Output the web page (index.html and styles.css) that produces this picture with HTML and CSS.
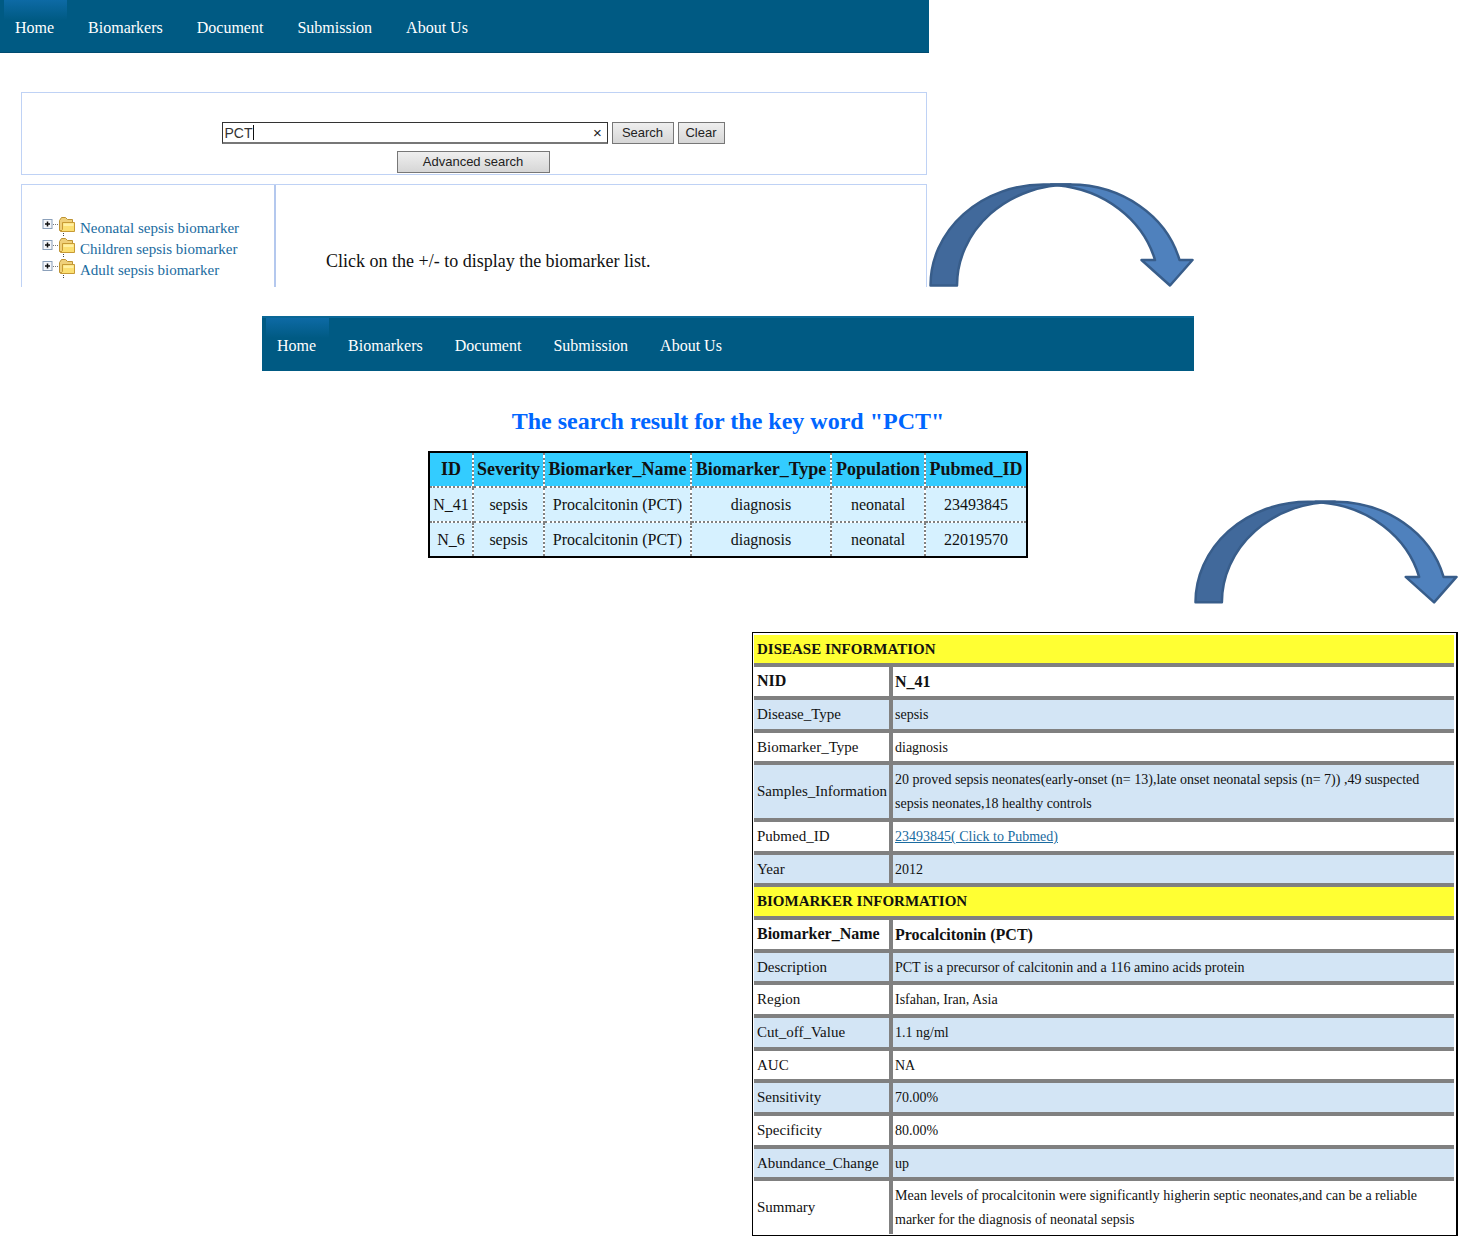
FILE: index.html
```html
<!DOCTYPE html>
<html lang="en">
<head>
<meta charset="utf-8">
<meta name="viewport" content="width=device-width, initial-scale=1">
<title>Sepsis biomarker search</title>
<link rel="stylesheet" href="styles.css">
</head>
<body>
<svg class="defs" aria-hidden="true">
  <symbol id="curved-arrow" viewBox="0 0 265 104">
    <path d="M1.5 102.5A113 101 0 0 1 114.500 1.500H141.500A113 101 0 0 0 28 102.500Z" fill="#41699b"/>
    <path d="M128 2.200A113 101 0 0 1 226 77H212.500L241 102.500L263.500 77H250.500A113 101 0 0 0 141.500 1.500H122Z" fill="#4f81bd"/>
  </symbol>
  <symbol id="plus-folder" viewBox="0 0 34 22">
    <rect x="1" y="3.500" width="9" height="9" fill="#f4f6fa" stroke="#8ba0ba"/>
    <path d="M3 8h5M5.500 5.500v5" stroke="#111" stroke-width="1.500"/>
    <path d="M11 8.500h6" stroke="#777" stroke-dasharray="1 1"/>
    <path d="M17.500 14.500V4.500L19.500 1.500H23.500L25.500 3.500H30.500V14.500Z" fill="#efd07a" stroke="#bd9333"/>
    <path d="M18.500 15.500L20.500 13.500V6.500H32.500V15.500Z" fill="#fbdf72" stroke="#c79a35"/>
    <path d="M21.500 7.500H31.500V10H21.500Z" fill="#fff0a4"/>
    <path d="M21.500 17v4" stroke="#444" stroke-dasharray="1 1"/>
  </symbol>
</svg>

<section class="step step-search">
  <div class="screen">
    <nav class="menu">
      <a class="active" href="#home">Home</a>
      <a href="#biomarkers">Biomarkers</a>
      <a href="#document">Document</a>
      <a href="#submission">Submission</a>
      <a href="#about">About Us</a>
    </nav>
    <div class="content">
      <form class="search">
        <div class="search-row">
          <div class="field">
            <input type="text" value="PCT" aria-label="Key word">
            <span class="caret"></span>
            <button class="reset" type="button" aria-label="Clear text">×</button>
          </div>
          <button class="btn btn-search" type="button">Search</button>
          <button class="btn btn-clear" type="button">Clear</button>
        </div>
        <button class="btn btn-advanced" type="button">Advanced search</button>
      </form>
      <div class="browser">
        <ul class="tree">
          <li><svg class="node"><use href="#plus-folder"/></svg><a href="#neonatal">Neonatal sepsis biomarker</a></li>
          <li><svg class="node"><use href="#plus-folder"/></svg><a href="#children">Children sepsis biomarker</a></li>
          <li><svg class="node"><use href="#plus-folder"/></svg><a href="#adult">Adult sepsis biomarker</a></li>
        </ul>
        <p class="hint">Click on the +/- to display the biomarker list.</p>
      </div>
    </div>
  </div>
  <svg class="arrow"><use href="#curved-arrow"/></svg>
</section>

<section class="step step-results">
  <div class="screen">
    <nav class="menu menu-tall">
      <a class="active" href="#home">Home</a>
      <a href="#biomarkers">Biomarkers</a>
      <a href="#document">Document</a>
      <a href="#submission">Submission</a>
      <a href="#about">About Us</a>
    </nav>
    <h1>The search result for the key word "PCT"</h1>
    <table class="results">
      <colgroup><col class="c-id"><col class="c-severity"><col class="c-name"><col class="c-type"><col class="c-pop"><col class="c-pubmed"></colgroup>
      <thead>
        <tr><th>ID</th><th>Severity</th><th>Biomarker_Name</th><th>Biomarker_Type</th><th>Population</th><th>Pubmed_ID</th></tr>
      </thead>
      <tbody>
        <tr><td>N_41</td><td>sepsis</td><td>Procalcitonin (PCT)</td><td>diagnosis</td><td>neonatal</td><td>23493845</td></tr>
        <tr><td>N_6</td><td>sepsis</td><td>Procalcitonin (PCT)</td><td>diagnosis</td><td>neonatal</td><td>22019570</td></tr>
      </tbody>
    </table>
  </div>
  <svg class="arrow"><use href="#curved-arrow"/></svg>
</section>

<section class="details">
  <table>
    <colgroup><col class="c-label"><col></colgroup>
    <tbody>
      <tr class="group"><th colspan="2">DISEASE INFORMATION</th></tr>
      <tr class="key"><th>NID</th><td>N_41</td></tr>
      <tr class="tint"><th>Disease_Type</th><td>sepsis</td></tr>
      <tr><th>Biomarker_Type</th><td>diagnosis</td></tr>
      <tr class="tint"><th>Samples_Information</th><td>20 proved sepsis neonates(early-onset (n= 13),late onset neonatal sepsis (n= 7)) ,49 suspected<br>sepsis neonates,18 healthy controls</td></tr>
      <tr><th>Pubmed_ID</th><td><a href="#pubmed">23493845( Click to Pubmed)</a></td></tr>
      <tr class="tint"><th>Year</th><td>2012</td></tr>
      <tr class="group"><th colspan="2">BIOMARKER INFORMATION</th></tr>
      <tr class="key"><th>Biomarker_Name</th><td>Procalcitonin (PCT)</td></tr>
      <tr class="tint"><th>Description</th><td>PCT is a precursor of calcitonin and a 116 amino acids protein</td></tr>
      <tr><th>Region</th><td>Isfahan, Iran, Asia</td></tr>
      <tr class="tint"><th>Cut_off_Value</th><td>1.1 ng/ml</td></tr>
      <tr><th>AUC</th><td>NA</td></tr>
      <tr class="tint"><th>Sensitivity</th><td>70.00%</td></tr>
      <tr><th>Specificity</th><td>80.00%</td></tr>
      <tr class="tint"><th>Abundance_Change</th><td>up</td></tr>
      <tr><th>Summary</th><td>Mean levels of procalcitonin were significantly higherin septic neonates,and can be a reliable<br>marker for the diagnosis of neonatal sepsis</td></tr>
    </tbody>
  </table>
</section>
</body>
</html>
```
FILE: styles.css
```css
* { box-sizing: border-box; }

body {
  margin: 0;
  background: #fff;
  color: #111;
  font-family: "Liberation Serif", "Times New Roman", serif;
  font-size: 16px;
}

.defs {
  position: absolute;
  width: 0;
  height: 0;
}

.step { display: flex; align-items: flex-end; }
.step .screen { flex: 1; min-width: 0; }
.step-search { padding-right: 264px; }
.step-results { padding: 29px 0 28px 262px; }

.arrow {
  flex: none;
  width: 265px;
  height: 104px;
  stroke: #385d8a;
  stroke-width: 2.5px;
  stroke-linejoin: round;
}
.step-results .arrow { width: 264px; }

/* Menu bar */
.menu {
  display: flex;
  gap: 10px;
  height: 53px;
  padding-left: 4px;
  background: #005a83;
  border-bottom: 1px solid #004b70;
}
.menu a {
  padding: 0 13px 0 11px;
  color: #fff;
  line-height: 56px;
  text-decoration: none;
}
.menu .active { background: linear-gradient(#0d6aa5, #005a83 20px); }
.menu-tall {
  gap: 8px;
  height: 55px;
  border-top: 2px solid #0a6796;
  border-bottom: 0;
}

/* Search form */
.content { padding: 39px 2px 0 21px; }
.search {
  display: flex;
  flex-direction: column;
  align-items: center;
  gap: 7px;
  padding: 29px 2px 1px 0;
  border: 1px solid #bfd2f5;
}
.search-row { display: flex; gap: 4px; }
.field {
  position: relative;
  display: flex;
  width: 386px;
  height: 22px;
  border: 1px solid #333;
  border-bottom: 2px solid #777;
}
.field input {
  flex: 1;
  min-width: 0;
  padding: 0 2px;
  border: 0;
  outline: 0;
  background: none;
  color: #333;
  font: 14px "Liberation Sans", Arial, sans-serif;
}
.caret {
  position: absolute;
  top: 2px;
  left: 30px;
  width: 1px;
  height: 15px;
  background: #111;
}
.reset {
  width: 18px;
  padding: 0;
  border: 0;
  background: none;
  color: #222;
  font: 15px/18px "Liberation Sans", Arial, sans-serif;
}
.btn {
  height: 22px;
  padding: 0 0 1px;
  border: 1px solid #777;
  background: linear-gradient(#efefef, #d6d6d6);
  color: #222;
  font: 13px "Liberation Sans", Arial, sans-serif;
}
.btn-search { width: 62px; }
.btn-clear { width: 47px; }
.btn-advanced { width: 153px; }

/* Biomarker browser */
.browser {
  display: flex;
  height: 103px;
  margin-top: 9px;
  border: 1px solid #bfd2f5;
  border-bottom: 0;
}
.tree {
  width: 254px;
  margin: 0;
  padding: 31px 0 0 20px;
  border-right: 2px solid #b4c8ee;
  list-style: none;
  font-size: 15px;
}
.tree li { display: flex; gap: 4px; height: 21px; }
.tree a { color: #1a6ba0; line-height: 25px; text-decoration: none; }
.node { width: 34px; height: 22px; fill: none; }
.hint { margin: 65px 0 0 50px; font-size: 18px; line-height: 22px; }

/* Search results */
h1 {
  margin: 36px 0 16px;
  color: #06f;
  font-size: 24px;
  line-height: 28px;
  text-align: center;
}
.results {
  width: 600px;
  margin: 0 auto 46px;
  border: 2px solid #000;
  border-collapse: collapse;
  table-layout: fixed;
  text-align: center;
}
.results th,
.results td {
  height: 35px;
  padding: 0;
  border: 2px dotted #808080;
  background-clip: padding-box;
}
.results th { background-color: #3cf; font-size: 18px; }
.results td { background-color: #d6f1ff; }
.results tr > :first-child { border-left: 2px solid #000; }
.results tr > :last-child { border-right: 2px solid #000; }
.results thead th { border-top: 2px solid #000; }
.results tbody tr:last-child td { border-bottom: 2px solid #000; }
.c-id { width: 44px; }
.c-severity { width: 71px; }
.c-name { width: 147px; }
.c-type { width: 140px; }
.c-pop { width: 94px; }

/* Biomarker details */
.details {
  width: 100%;
  max-width: 706px;
  margin-left: auto;
  padding: 2px 2px 1px 1px;
  border: 1px solid #000;
  border-right-width: 2px;
}
.details table {
  width: 100%;
  border-collapse: separate;
  border-spacing: 0;
  table-layout: fixed;
  font-size: 15px;
  line-height: 24px;
  text-align: left;
}
.c-label { width: 139px; }
.details th,
.details td {
  height: 33px;
  padding: 2px 3px 3px;
  border-bottom: 4px solid #808080;
  font-weight: normal;
}
.details td { padding: 3px 2px 2px; font-size: 14px; }
.details tr:nth-child(3n + 1) > th { height: 32px; padding-bottom: 2px; }
.details tr:nth-child(3n + 1) > td { height: 32px; padding-bottom: 1px; }
.details th { border-right: 4px solid #808080; }
.details .group th { border-right: 0; background: #ff3; font-weight: bold; }
.details .key > * { font-size: 16px; font-weight: bold; }
.details .tint > * { background: #d3e5f5; }
.details tr:last-child > * { border-bottom: 0; }
.details a { color: #1a6ba0; }
```
